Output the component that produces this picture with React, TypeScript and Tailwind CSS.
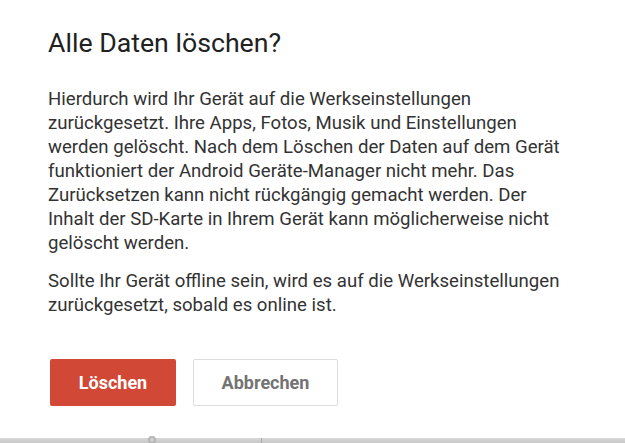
import React from "react";

export default function App() {
  return (
    <div className="w-[625px] h-[443px] bg-white flex flex-col overflow-hidden" style={{ fontFamily: "Roboto, 'Liberation Sans', sans-serif" }}>
      <div className="flex-1 flex flex-col pl-[48px] pr-[30px] pt-[27px]">
        <h1 className="text-[26.7px] leading-[32px] text-[#212121] font-normal">Alle Daten löschen?</h1>
        <div className="mt-[28px] text-[18.6px] leading-[24px] text-[#333333]">
          <p className="w-[514px]">
            Hierdurch wird Ihr Gerät auf die Werkseinstellungen zurückgesetzt. Ihre Apps, Fotos, Musik und Einstellungen werden gelöscht. Nach dem Löschen der Daten auf dem Gerät funktioniert der Android Geräte-Manager nicht mehr. Das Zurücksetzen kann nicht rückgängig gemacht werden. Der Inhalt der SD-Karte in Ihrem Gerät kann möglicherweise nicht gelöscht werden.
          </p>
          <p className="mt-[14px] w-[514px]">
            Sollte Ihr Gerät offline sein, wird es auf die Werkseinstellungen zurückgesetzt, sobald es online ist.
          </p>
        </div>
        <div className="mt-[42px] flex gap-[17px] pl-[2px]">
          <button className="w-[126px] h-[47px] rounded-[2px] bg-[#d14836] text-white font-bold text-[18px]">Löschen</button>
          <button className="w-[145px] h-[47px] rounded-[2px] bg-white border border-[#dcdcdc] text-[#737373] font-bold text-[18px]">Abbrechen</button>
        </div>
      </div>
      <div className="h-[5px] bg-gradient-to-b from-[#d6d6d6] to-[#c8c8c8] relative">
        <div className="absolute left-[148px] top-[-2px] w-[8px] h-[8px] rounded-full border-2 border-[#b5b5b5]" />
        <div className="absolute left-[261px] top-0 w-[1px] h-[5px] bg-[#aaaaaa]" />
      </div>
    </div>
  );
}
